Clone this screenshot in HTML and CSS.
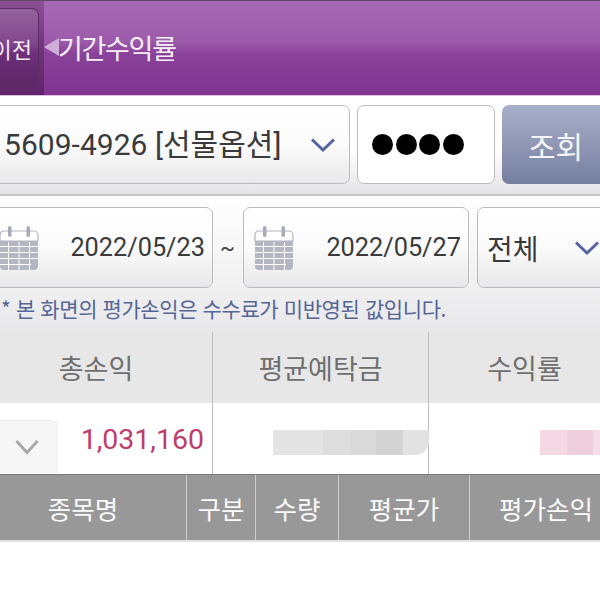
FILE: index.html
```html
<!DOCTYPE html>
<html lang="ko">
<head>
<meta charset="utf-8">
<title>기간수익률</title>
<link rel="stylesheet" href="styles.css">
</head>
<body>
<div class="page">
  <header class="topbar">
    <div class="back-zone">
      <div class="back-btn"><span class="back-label">이전</span></div>
    </div>
    <div class="back-arrow"></div>
    <h1 class="title">기간수익률</h1>
  </header>

  <section class="row-account">
    <div class="field account">
      <span class="account-text">5609-4926 [선물옵션]</span>
      <svg class="chev" width="26" height="16" viewBox="0 0 26 16"><path d="M2 2.5 L13 13 L24 2.5" fill="none" stroke="#54659f" stroke-width="3"/></svg>
    </div>
    <div class="field password"><i></i><i></i><i></i><i></i></div>
    <div class="search-btn">조회</div>
  </section>

  <section class="row-date">
    <div class="dates">
      <div class="field date date-from">
        <svg class="cal" width="40" height="46" viewBox="0 0 40 46"><use href="#calendar"/></svg>
        <span class="date-text">2022/05/23</span>
      </div>
      <span class="tilde">~</span>
      <div class="field date date-to">
        <svg class="cal" width="40" height="46" viewBox="0 0 40 46"><use href="#calendar"/></svg>
        <span class="date-text">2022/05/27</span>
      </div>
      <div class="field kind">
        <span class="kind-text">전체</span>
        <svg class="chev" width="26" height="16" viewBox="0 0 26 16"><path d="M2 2.5 L13 13 L24 2.5" fill="none" stroke="#54659f" stroke-width="3"/></svg>
      </div>
    </div>
    <p class="note">* 본 화면의 평가손익은 수수료가 미반영된 값입니다.</p>
  </section>

  <section class="summary">
    <div class="sum-col col-a">
      <div class="sum-head head-a">총손익</div>
      <div class="sum-cell cell-a">
        <div class="toggle"><svg width="26" height="16" viewBox="0 0 26 16"><path d="M2.5 2 L13 13.5 L23.500 2" fill="none" stroke="#a8a8a8" stroke-width="3"/></svg></div>
        <span class="profit">1,031,160</span>
      </div>
    </div>
    <div class="sum-col col-b">
      <div class="sum-head">평균예탁금</div>
      <div class="sum-cell cell-b">
        <div class="smudge grey"><b></b><b></b><b></b><b></b><b></b></div>
      </div>
    </div>
    <div class="sum-col col-c">
      <div class="sum-head head-c">수익률</div>
      <div class="sum-cell cell-c">
        <div class="smudge pink"><b></b><b></b><b></b></div>
      </div>
    </div>
  </section>

  <section class="list-head">
    <div class="lh c1">종목명</div>
    <div class="lh c2">구분</div>
    <div class="lh c3">수량</div>
    <div class="lh c4">평균가</div>
    <div class="lh c5">평가손익</div>
  </section>
</div>

<svg class="defs" width="0" height="0">
  <defs>
    <g id="calendar">
      <rect x="1" y="6" width="38" height="39" rx="4" fill="#b4b6c2"/>
      <path d="M1 10 a4 4 0 0 1 4-4 h30 a4 4 0 0 1 4 4 v6 H1z" fill="#fff" stroke="#b4b6c2" stroke-width="1.200"/>
      <rect x="9" y="1" width="3.500" height="11" rx="1.750" fill="#a8aab7"/>
      <rect x="27.500" y="1" width="3.500" height="11" rx="1.750" fill="#a8aab7"/>
      <path d="M1 21.500H39M1 27.500H39M1 33.500H39M1 39.500H32M9.500 17V45M20 17V45M30.500 17V45" stroke="#fff" stroke-width="1" fill="none"/>
    </g>
  </defs>
</svg>
</body>
</html>
```
FILE: styles.css
```css
* { box-sizing: border-box; }
html, body { margin: 0; padding: 0; background: #fff; }
body { width: 600px; height: 600px; overflow: hidden; font-family: Roboto, "Noto Sans CJK KR", sans-serif; color: #3a3a3c; }
.page { width: 600px; overflow: hidden; }

.topbar {
  height: 96px; display: flex; align-items: center;
  background: linear-gradient(#a768b4 0%, #9d5cab 42%, #8a419a 56%, #7f3690 100%);
  border-top: 1px solid #5a4a60; border-bottom: 1px solid #d9c3de;
}
.back-zone { width: 44px; height: 100%; flex: none; background: linear-gradient(#8a5095, #72327f 50%, #5f2569); display: flex; align-items: center; }
.back-btn { width: 39px; height: 79px; margin-top: -1px; border: 1px solid #59305f; border-left: 0; border-radius: 0 7px 7px 0; background: linear-gradient(#94639d, #80468c 45%, #6d2f79 58%, #5d2767); display: flex; align-items: center; justify-content: flex-end; padding-right: 6px; }
.back-label { font-size: 22px; color: #f4ebf5; white-space: nowrap; font-family: "Noto Sans CJK KR", sans-serif; line-height: 1; }
.back-arrow { width: 0; height: 0; flex: none; border: 9px solid transparent; border-left: 0; border-right: 15px solid #cfaed8; margin-bottom: 2px; }
.title { margin: 0 0 0 -1px; font-size: 27px; font-weight: 400; color: #f7f0f8; font-family: "Noto Sans CJK KR", sans-serif; line-height: 1; letter-spacing: -1.300px; position: relative; top: -1px; }

.row-account { height: 100px; padding-top: 9px; display: flex; gap: 7px; background: linear-gradient(#fff 55%, #e4e4e6); border-bottom: 2px solid #c6c6c8; }
.field { border: 1px solid #bcbcbe; border-radius: 7px; background: linear-gradient(#fff, #fbfbfb 50%, #e8e8ea); display: flex; align-items: center; flex: none; }
.account { width: 360px; height: 79px; margin-left: -10px; padding-left: 13px; position: relative; }
.account-text { font-size: 30px; line-height: 1; white-space: nowrap; letter-spacing: .03px; }
.account .chev { margin-left: auto; margin-right: 13px; }
.password { width: 138px; height: 79px; background: #fff; gap: 2.500px; padding-left: 14px; }
.password i { width: 21px; height: 21px; border-radius: 50%; background: #000; }
.search-btn { width: 110px; height: 79px; flex: none; border-radius: 7px 0 0 7px; background: linear-gradient(#a9b0cb, #767e9f); color: #f4f5f8; font-size: 30px; font-family: "Noto Sans CJK KR", sans-serif; display: flex; align-items: center; padding-left: 26px; line-height: 1; }

.row-date { height: 136px; padding-top: 11px; background: linear-gradient(#fff 0%, #f4f4f5 50%, #e8e8ea 100%); }
.dates { display: flex; align-items: center; height: 81px; }
.date { height: 81px; position: relative; }
.date-from { width: 233px; margin-left: -20px; padding-left: 20px; }
.date-to { width: 226px; }
.cal { display: block; flex: none; }
.date-from .cal { margin-left: -2px; }
.date-to .cal { margin-left: 10px; }
.date-text { margin-left: auto; margin-right: 7px; font-size: 25.300px; line-height: 1; }
.tilde { width: 30px; flex: none; text-align: center; font-size: 22px; line-height: 1; color: #444; padding-right: 1px; }
.kind { width: 140px; height: 81px; margin-left: 8px; padding-left: 9px; }
.kind-text { font-size: 28px; font-family: "Noto Sans CJK KR", sans-serif; line-height: 1; }
.kind .chev { margin-left: 35px; }
.note { margin: 8px 0 0 1px; font-size: 21px; line-height: 24px; color: #566595; white-space: nowrap; font-family: "Noto Sans CJK KR", sans-serif; letter-spacing: -.4px; }

.summary { display: flex; height: 142px; }
.sum-col { flex: none; display: flex; flex-direction: column; }
.col-a { width: 213px; border-right: 1px solid #bdbdbd; }
.col-b { width: 216px; border-right: 1px solid #bdbdbd; }
.col-c { width: 171px; }
.sum-head { height: 71px; background: #e7e7e7; display: flex; align-items: center; justify-content: center; font-size: 27px; color: #6f6f6f; font-family: "Noto Sans CJK KR", sans-serif; padding-bottom: 1px; }
.head-a { padding-right: 20px; }
.head-c { padding-left: 20px; }
.sum-cell { height: 71px; background: #fff; display: flex; align-items: flex-start; }
.cell-a { padding-top: 17px; }
.toggle { width: 58px; height: 53px; flex: none; background: #f6f6f6; border: 1px solid #ebebeb; border-left: 0; border-bottom: 0; border-radius: 0 7px 0 0; display: flex; align-items: center; justify-content: center; padding: 0 4px 0 0; }
.profit { margin-left: auto; margin-right: 8px; margin-top: 3px; font-size: 28.500px; line-height: 34px; color: #bd3d6b; }
.cell-b { padding: 27px 0 0 60px; }
.cell-c { padding: 27px 0 0 111px; }
.smudge { display: flex; height: 25px; }
.smudge b { height: 100%; display: block; width: 26.500px; }
.grey { border-radius: 0 0 14px 0; }
.grey b:nth-child(1) { background: #e4e4e4; width: 50px; }
.grey b:nth-child(2) { background: #dedede; }
.grey b:nth-child(3) { background: #dadada; }
.grey b:nth-child(4) { background: #d3d3d3; }
.grey b:nth-child(5) { background: #e2e2e2; border-radius: 0 0 14px 0; }
.pink b:nth-child(1) { background: #f4d8e3; }
.pink b:nth-child(2) { background: #f0cfdc; }
.pink b:nth-child(3) { background: #f4dde6; width: 7px; }

.list-head { display: flex; height: 68px; background: #989898; border-top: 1px solid #7a7a7a; border-bottom: 2px solid #e2e2e2; }
.lh { flex: none; display: flex; align-items: center; justify-content: center; color: #fafafa; font-size: 25.500px; font-family: "Noto Sans CJK KR", sans-serif; border-right: 1px solid #cfcfcf; padding-bottom: 1px; }
.c1 { width: 187px; padding-right: 20px; }
.c2 { width: 69px; }
.c3 { width: 83px; }
.c4 { width: 131px; }
.c5 { width: 130px; border-right: 0; justify-content: flex-start; padding-left: 29px; }
.defs { position: absolute; }
```
